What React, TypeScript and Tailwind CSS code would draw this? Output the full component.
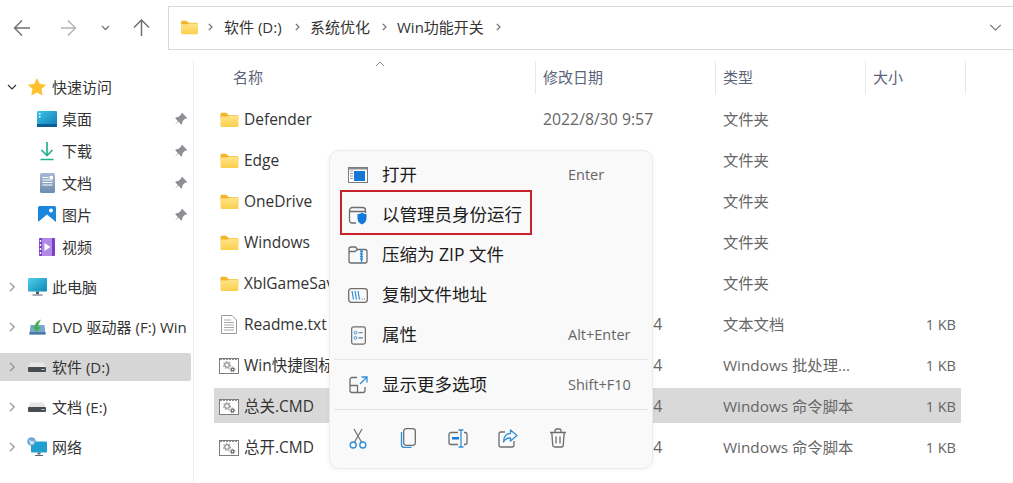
import React from 'react';

const Folder = ({ className = 'w-[19px] h-[16px]' }: { className?: string }) => (
  <svg viewBox="0 0 19 16" className={className}>
    <defs>
      <linearGradient id="fold" x1="0" y1="0" x2="0" y2="1">
        <stop offset="0" stopColor="#ffe58a" />
        <stop offset="1" stopColor="#fbcf4c" />
      </linearGradient>
    </defs>
    <path d="M0.5 2.2C0.5 1.3 1.1 .8 2 .8h4.4l2 2.2H17c.9 0 1.5.6 1.5 1.5v3H.5z" fill="#f2b52c" />
    <path d="M.5 4.6h7.6l1.6-1h7.4c.9 0 1.4.6 1.4 1.4v8.6c0 .9-.6 1.5-1.500 1.500H2c-.9 0-1.500-.6-1.500-1.500z" fill="url(#fold)" />
  </svg>
);

const CmdIcon = () => (
  <svg viewBox="0 0 20 16" className="w-[20px] h-[16px]">
    <rect x=".5" y=".5" width="19" height="15" fill="#fff" stroke="#7d7d7d" />
    <path d="M1 1.500h18" stroke="#8f8f8f" strokeDasharray="2 1" />
    <circle cx="8" cy="7" r="2.300" fill="none" stroke="#a3a3a3" strokeWidth="1.500" />
    <circle cx="8" cy="7" r="3.500" fill="none" stroke="#a3a3a3" strokeWidth="1.200" strokeDasharray="1.500 1.500" />
    <circle cx="13.500" cy="11.500" r="1.400" fill="none" stroke="#6f6f6f" strokeWidth="1.200" />
    <circle cx="13.500" cy="11.500" r="2.400" fill="none" stroke="#6f6f6f" strokeWidth="1" strokeDasharray="1 1" />
  </svg>
);

const TxtIcon = () => (
  <svg viewBox="0 0 16 19" className="w-[16px] h-[19px]">
    <path d="M.5.5h10.500l4.500 4.500v13.500H.5z" fill="#fff" stroke="#9a9a9a" />
    <path d="M3 5h7M3 7.500h10M3 10h10M3 12.500h10M3 15h10" stroke="#a8a8a8" />
  </svg>
);

const Chev = ({ open = false }: { open?: boolean }) => (
  <svg viewBox="0 0 10 10" className="w-[10px] h-[10px]">
    {open ? (
      <path d="M1 3l4 4 4-4" fill="none" stroke="#333" strokeWidth="1.200" />
    ) : (
      <path d="M3 .8l4.200 4.200L3 9.200" fill="none" stroke="#8f8f8f" strokeWidth="1.200" />
    )}
  </svg>
);

const Crumb = () => (
  <svg viewBox="0 0 5 8" className="w-[5px] h-[8px] shrink-0 block" fill="none">
    <path d="M.8.8L4 4 .8 7.200" stroke="#6e6e6e" strokeWidth="1.200" />
  </svg>
);

const Pin = () => (
  <svg viewBox="0 0 14 14" className="w-[14px] h-[14px]">
    <path d="M8 .8l5.200 5.200-1.300.7-1 .1-2.500 2.600-.2 2.300-1 1L4.500 9.500.9 13.100l3-4.100L1.200 6.300l1-1 2.300-.2 2.600-2.500.1-1z" fill="#8c9096" />
  </svg>
);

const Star = () => (
  <svg viewBox="0 0 20 20" className="w-[20px] h-[20px]">
    <path d="M10 1l2.800 5.900 6.400.8-4.700 4.400 1.200 6.400L10 15.400l-5.700 3.100 1.200-6.400L.8 7.700l6.400-.8z" fill="#fdc02f" />
  </svg>
);

const Desktop = () => (
  <svg viewBox="0 0 20 16" className="w-[20px] h-[16px]">
    <defs>
      <linearGradient id="desk" x1="0" y1="0" x2="1" y2="1">
        <stop offset="0" stopColor="#3cc6e6" />
        <stop offset="1" stopColor="#0f78b4" />
      </linearGradient>
    </defs>
    <rect width="20" height="16" rx="1" fill="url(#desk)" />
    <path d="M0 13h20v3H0z" fill="#0c5f94" />
    <path d="M2 2h1.500v1.500H2zM2 5h1.500v1.500H2z" fill="#fff" />
  </svg>
);

const Download = () => (
  <svg viewBox="0 0 16 20" className="w-[16px] h-[20px]">
    <path d="M8 1v13M2.500 9L8 14.500 13.500 9M1.500 18.500h13" fill="none" stroke="#27b08f" strokeWidth="1.700" />
  </svg>
);

const Docs = () => (
  <svg viewBox="0 0 15 20" className="w-[15px] h-[20px]">
    <defs>
      <linearGradient id="docs" x1="0" y1="0" x2="0" y2="1">
        <stop offset="0" stopColor="#a6bbd3" />
        <stop offset="1" stopColor="#6d8cb0" />
      </linearGradient>
    </defs>
    <rect width="15" height="20" rx="1.500" fill="url(#docs)" />
    <path d="M2.500 4.500h6M2.500 7h10M2.500 9.500h10M2.500 12h10" stroke="#fff" />
    <path d="M9.500 3h3.500v3H9.500z" fill="#fff" />
  </svg>
);

const Pics = () => (
  <svg viewBox="0 0 18 18" className="w-[18px] h-[18px]">
    <rect width="18" height="18" rx="1.500" fill="#1a87dc" />
    <path d="M0 16l9-7.500L18 16v2H0z" fill="#fff" />
    <circle cx="13" cy="4.500" r="2" fill="#fff" />
  </svg>
);

const Video = () => (
  <svg viewBox="0 0 16 18" className="w-[16px] h-[18px]">
    <rect width="16" height="18" rx="1" fill="#7b3fc9" />
    <path d="M3 0h10v18H3z" fill="#b18ae6" />
    <path d="M5.500 5l6 4-6 4z" fill="#fff" />
    <path d="M.8 2h1.400v2H.8zM.8 6h1.400v2H.8zM.8 10h1.400v2H.8zM.8 14h1.400v2H.8z" fill="#fff" />
  </svg>
);

const Monitor = () => (
  <svg viewBox="0 0 19 18" className="w-[19px] h-[18px]">
    <defs>
      <linearGradient id="mon" x1="0" y1="0" x2="1" y2="1">
        <stop offset="0" stopColor="#4fd0ea" />
        <stop offset="1" stopColor="#0e86b8" />
      </linearGradient>
    </defs>
    <rect width="19" height="13.500" rx=".8" fill="url(#mon)" />
    <path d="M8 13.500h3v2.500H8zM4.500 16.500h10v1h-10z" fill="#4f5a64" />
  </svg>
);

const Dvd = () => (
  <svg viewBox="0 0 17 16" className="w-[17px] h-[16px]">
    <path d="M1.500 6h14l1 9.500H.5z" fill="#7aa6cc" />
    <path d="M.5 13h16v2.500H.5z" fill="#4b7ba5" />
    <path d="M12 .5C8 2 6 4.500 5.500 8l-2-.5L7.500 13l4-4.500-2.500-.2C9.200 5.500 10.500 3 12 .5z" fill="#3fb24a" />
  </svg>
);

const Drive = () => (
  <svg viewBox="0 0 18 10" className="w-[18px] h-[10px]">
    <path d="M2.500.5h13L18 5H0z" fill="#e6e6e6" />
    <rect y="5" width="18" height="5" rx="1" fill="#4a4d50" />
    <path d="M13.500 7h3v1h-3z" fill="#8fd0f0" />
  </svg>
);

const Network = () => (
  <svg viewBox="0 0 20 20" className="w-[20px] h-[20px]">
    <rect x="4" y="4.500" width="16" height="11" rx=".8" fill="#1f9fd0" />
    <path d="M10.500 15.500h3v2h-3zM8 18h8v1H8z" fill="#5b6770" />
    <circle cx="4.500" cy="4.500" r="4.300" fill="#6ea6d8" />
    <path d="M2 2.500l3 2 2-1-.5 3.500-3 .5z" fill="#d6e7f5" />
  </svg>
);

const IconBox = ({ children }: { children: React.ReactNode }) => (
  <span className="w-[24px] flex justify-center items-center shrink-0">{children}</span>
);

const MenuRow = ({ icon, label, hint, boxed }: { icon: React.ReactNode; label: string; hint?: string; boxed?: boolean }) => (
  <div className="h-[40px] flex items-center relative">
    <span className="w-[52px] flex justify-center pl-[4px] shrink-0">{icon}</span>
    <span className="text-[17.5px] text-[#1c1c1c] leading-none whitespace-nowrap">{label}</span>
    {hint && <span className="absolute left-[238px] text-[14.5px] text-[#666] whitespace-nowrap">{hint}</span>}
    {boxed && <span className="absolute left-[10px] top-0 w-[192px] h-[45px] -mt-[5px] border-2 border-[#c8232c]" />}
  </div>
);

// dates of the rows under the context menu are not visible, so only the ones that show are filled in
const files = [
  { name: 'Defender', date: '2022/8/30 9:57', type: '文件夹', icon: <Folder /> },
  { name: 'Edge', type: '文件夹', icon: <Folder /> },
  { name: 'OneDrive', type: '文件夹', icon: <Folder /> },
  { name: 'Windows', type: '文件夹', icon: <Folder /> },
  { name: 'XblGameSave', type: '文件夹', icon: <Folder /> },
  { name: 'Readme.txt', date: '2022/8/30 19:54', type: '文本文档', size: '1 KB', icon: <TxtIcon /> },
  { name: 'Win快捷图标修复.bat', date: '2022/8/30 19:54', type: 'Windows 批处理...', size: '1 KB', icon: <CmdIcon /> },
  { name: '总关.CMD', date: '2022/8/30 19:54', type: 'Windows 命令脚本', size: '1 KB', icon: <CmdIcon />, selected: true },
  { name: '总开.CMD', date: '2022/8/30 19:54', type: 'Windows 命令脚本', size: '1 KB', icon: <CmdIcon /> },
];

export default function App() {
  return (
    <div
      className="w-[1013px] h-[483px] bg-white overflow-hidden relative text-[15px] text-[#333]"
      style={{ fontFamily: '"Open Sans", "Noto Sans CJK SC", sans-serif' }}
    >
      {/* toolbar */}
      <div className="h-[60px] flex items-start pt-[6px]">
        <div className="w-[168px] h-[43px] shrink-0 flex items-center">
          <svg viewBox="0 0 168 43" className="w-[168px] h-[43px]" fill="none">
            <path d="M30 22H15M22 14.500L14.500 22l7.500 7.500" stroke="#6f6f6f" strokeWidth="1.400" />
            <path d="M61 22h14M68 14.500l7.500 7.500-7.500 7.500" stroke="#b4b4b4" strokeWidth="1.400" />
            <path d="M102 20l3.500 3.500 3.500-3.500" stroke="#777" strokeWidth="1.300" />
            <path d="M141.500 30V14M134 21.500l7.500-7.500 7.500 7.500" stroke="#6a6a6a" strokeWidth="1.400" />
          </svg>
        </div>
        <div className="h-[44px] flex-1 border-y border-l border-[#d9d9d9] flex items-center text-[15px] text-[#333] pl-[11px] pb-[2px]">
          <Folder className="w-[19px] h-[15px]" />
          <span className="ml-[9px]"><Crumb /></span>
          <span className="ml-[11px] w-[59px] whitespace-nowrap">软件 (D:)</span>
          <span className="ml-[12px]"><Crumb /></span>
          <span className="ml-[10px] w-[60px] whitespace-nowrap">系统优化</span>
          <span className="ml-[12px]"><Crumb /></span>
          <span className="ml-[10px] w-[88px] whitespace-nowrap">Win功能开关</span>
          <span className="ml-[11px]"><Crumb /></span>
          <svg viewBox="0 0 14 8" className="w-[13px] h-[7px] ml-auto mr-[11px]" fill="none">
            <path d="M1 1l6 6 6-6" stroke="#666" strokeWidth="1.200" />
          </svg>
        </div>
      </div>

      <div className="flex h-[423px]">
        {/* sidebar */}
        <div className="w-[194px] shrink-0 border-r border-[#f0f0f0] pt-[11px] pr-[2px] text-[#333]">
          <div className="h-[32px] flex items-center">
            <span className="w-[24px] flex justify-center"><Chev open /></span>
            <span className="w-[26px] flex justify-center"><Star /></span>
            <span className="ml-[2px]">快速访问</span>
          </div>
          {[
            { label: '桌面', icon: <Desktop />, pin: true },
            { label: '下载', icon: <Download />, pin: true },
            { label: '文档', icon: <Docs />, pin: true },
            { label: '图片', icon: <Pics />, pin: true },
            { label: '视频', icon: <Video /> },
          ].map((item) => (
            <div key={item.label} className="h-[32px] flex items-center pl-[35px]">
              <IconBox>{item.icon}</IconBox>
              <span className="ml-[3px]">{item.label}</span>
              {item.pin && <span className="ml-auto mr-[3px]"><Pin /></span>}
            </div>
          ))}
          <div className="h-[4px]" />
          {[
            { label: '此电脑', icon: <Monitor /> },
            { label: 'DVD 驱动器 (F:) Win', icon: <Dvd /> },
            { label: '软件 (D:)', icon: <Drive />, selected: true },
            { label: '文档 (E:)', icon: <Drive /> },
            { label: '网络', icon: <Network /> },
          ].map((item) => (
            <div key={item.label} className="h-[40px] flex items-center">
              <div className={`h-[28px] w-full flex items-center rounded-r-[2px] overflow-hidden ${item.selected ? 'bg-[#d6d6d6]' : ''}`}>
                <span className="w-[24px] flex justify-center"><Chev /></span>
                <span className="w-[26px] flex justify-center">{item.icon}</span>
                <span className="ml-[2px] whitespace-nowrap">{item.label}</span>
              </div>
            </div>
          ))}
        </div>

        {/* file list */}
        <div className="flex-1 min-w-0">
          <div className="h-[41px] pt-[1px] flex items-start relative text-[#5b6478] text-[15px]">
            <svg viewBox="0 0 10 6" className="absolute left-[181px] top-[1px] w-[10px] h-[6px]" fill="none">
              <path d="M1 5l4-4 4 4" stroke="#8a8a8a" />
            </svg>
            <div className="h-[33px] w-[342px] pl-[39px] flex items-center border-r border-[#e8e8e8]">名称</div>
            <div className="h-[33px] w-[180px] pl-[7px] flex items-center border-r border-[#e8e8e8]">修改日期</div>
            <div className="h-[33px] w-[150px] pl-[7px] flex items-center border-r border-[#e8e8e8]">类型</div>
            <div className="h-[33px] w-[100px] pl-[7px] flex items-center border-r border-[#e8e8e8]">大小</div>
          </div>
          <div className="ml-[20px] w-[747px] flex flex-col gap-[6px]">
            {files.map((f) => (
              <div key={f.name} className={`h-[35px] pt-[2px] flex items-center shrink-0 ${f.selected ? 'bg-[#d9d9d9]' : ''}`}>
                <span className="w-[30px] flex justify-center shrink-0">{f.icon}</span>
                <span className="w-[299px] shrink-0 text-[#333] text-[15.5px] whitespace-nowrap overflow-hidden">{f.name}</span>
                <span className="w-[180px] shrink-0 text-[#666] text-[15.8px] whitespace-nowrap">{f.date}</span>
                <span className="w-[200px] shrink-0 text-[#666] text-[15.3px] whitespace-nowrap">{f.type}</span>
                <span className="w-[33px] text-right text-[#666] text-[14.5px] whitespace-nowrap">{f.size}</span>
              </div>
            ))}
          </div>
        </div>
      </div>

      {/* context menu */}
      <div className="absolute left-[329px] top-[150px] w-[324px] h-[319px] bg-[#f9f9f9] rounded-[10px] border border-[#ececec] shadow-[0_1px_4px_rgba(0,0,0,0.06)] pt-[4px]">
        <MenuRow
          label="打开"
          hint="Enter"
          icon={
            <svg viewBox="0 0 20 16" className="w-[20px] h-[16px]">
              <rect x=".5" y=".5" width="19" height="15" fill="#fff" stroke="#7c7c7c" />
              <path d="M1 1h18v1.500H1z" fill="#8a8a8a" />
              <path d="M2 4h3M2 6.500h3M2 9h3M2 11.500h3" stroke="#9a9a9a" />
              <rect x="6" y="4" width="11" height="10" fill="#1678d4" />
            </svg>
          }
        />
        <MenuRow
          boxed
          label="以管理员身份运行"
          icon={
            <svg viewBox="0 0 20 19" className="w-[20px] h-[19px]" fill="none">
              <path d="M8 17H4a2.500 2.500 0 0 1-2.500-2.500v-10A3 3 0 0 1 4.500 1.500h10A3 3 0 0 1 17.500 4.500V7M2 5.500h15" stroke="#6d6d6d" strokeWidth="1.300" />
              <path d="M14 6.500c1.300 1 2.800 1.500 4.500 1.500v4.500c0 3-2 5-4.500 6-2.500-1-4.500-3-4.500-6V8c1.700 0 3.200-.5 4.500-1.500z" fill="#1579d8" />
            </svg>
          }
        />
        <MenuRow
          label="压缩为 ZIP 文件"
          icon={
            <svg viewBox="0 0 20 18" className="w-[20px] h-[18px]" fill="none">
              <path d="M1 4.500V15a2 2 0 0 0 2 2h14a2 2 0 0 0 2-2V5.500a2 2 0 0 0-2-2H9.500L7.500 1H3a2 2 0 0 0-2 2zM1 5.500h6l2.500-2" stroke="#6d6d6d" strokeWidth="1.300" />
              <path d="M13.500 3.500v13.500M12 5.500h3M12 8h3M12 10.500h3M12 13h3" stroke="#2f8fd8" strokeWidth="1.300" />
            </svg>
          }
        />
        <MenuRow
          label="复制文件地址"
          icon={
            <svg viewBox="0 0 20 15" className="w-[20px] h-[15px]" fill="none">
              <rect x=".7" y=".7" width="18.600" height="13.600" rx="2.500" stroke="#6d6d6d" strokeWidth="1.300" />
              <path d="M4 3l1.500 8.500M7 3l1.500 8.500M10 3l1.500 8.500" stroke="#2f8fd8" strokeWidth="1.200" />
              <path d="M13.500 11h1M16 11h1" stroke="#6d6d6d" strokeWidth="1.200" />
            </svg>
          }
        />
        <MenuRow
          label="属性"
          hint="Alt+Enter"
          icon={
            <svg viewBox="0 0 16 20" className="w-[15px] h-[19px]" fill="none">
              <rect x=".7" y=".7" width="14.600" height="18.600" rx="2" stroke="#6d6d6d" strokeWidth="1.300" />
              <circle cx="4.800" cy="7" r="1.500" stroke="#2f8fd8" />
              <circle cx="4.800" cy="12.500" r="1.500" stroke="#2f8fd8" />
              <path d="M8 7h4.500M8 12.500h4.500" stroke="#6d6d6d" strokeWidth="1.200" />
            </svg>
          }
        />
        <div className="h-[5px] border-b border-[#e5e5e5] mx-[4px]" />
        <div className="h-[45px] pt-[5px]">
          <MenuRow
            label="显示更多选项"
            hint="Shift+F10"
            icon={
              <svg viewBox="0 0 19 18" className="w-[19px] h-[18px]" fill="none">
                <path d="M8 1.500H3A2 2 0 0 0 1 3.500v11A2 2 0 0 0 3 16.500h11a2 2 0 0 0 2-2V11M1 9.500h7.500v7" stroke="#6d6d6d" strokeWidth="1.300" />
                <path d="M11 8l7-7M12.500 1H18v5.500" stroke="#2f8fd8" strokeWidth="1.300" />
              </svg>
            }
          />
        </div>
        <div className="h-[5px] border-b border-[#e5e5e5] mx-[4px]" />
        <div className="flex items-center h-[56px] pl-[3px]">
          <span className="w-[50px] flex justify-center">
            <svg viewBox="0 0 18 21" className="w-[18px] h-[21px]" fill="none">
              <path d="M5 1l8 14M13 1L5 15" stroke="#6d6d6d" strokeWidth="1.200" />
              <circle cx="4.200" cy="17" r="3" stroke="#2f8fd8" strokeWidth="1.400" />
              <circle cx="13.800" cy="17" r="3" stroke="#2f8fd8" strokeWidth="1.400" />
            </svg>
          </span>
          <span className="w-[50px] flex justify-center">
            <svg viewBox="0 0 16 20" className="w-[16px] h-[20px]" fill="none">
              <path d="M1.500 4v12.500a3 3 0 0 0 3 3h7" stroke="#2f8fd8" strokeWidth="1.400" />
              <rect x="3.700" y=".7" width="11.600" height="16.600" rx="2.500" stroke="#6d6d6d" strokeWidth="1.300" />
            </svg>
          </span>
          <span className="w-[50px] flex justify-center">
            <svg viewBox="0 0 20 19" className="w-[20px] h-[19px]" fill="none">
              <path d="M10 3.500H3a2 2 0 0 0-2 2v8a2 2 0 0 0 2 2h7M16 3.500h1a2 2 0 0 1 2 2v8a2 2 0 0 1-2 2h-1" stroke="#6d6d6d" strokeWidth="1.300" />
              <path d="M4 8h7v2.500H4z" fill="#1579d8" />
              <path d="M10.500 1h5M13 1v17M10.500 18h5" stroke="#2f8fd8" strokeWidth="1.300" />
            </svg>
          </span>
          <span className="w-[50px] flex justify-center">
            <svg viewBox="0 0 20 19" className="w-[20px] h-[19px]" fill="none">
              <path d="M7 3H3a2 2 0 0 0-2 2v11a2 2 0 0 0 2 2h11a2 2 0 0 0 2-2v-4" stroke="#6d6d6d" strokeWidth="1.300" />
              <path d="M12.500 1l6.500 5.500-6.500 5.500V9C9 9 7 10 5.500 13c0-5 2.500-8.500 7-8.500z" stroke="#2f8fd8" strokeWidth="1.300" strokeLinejoin="round" />
            </svg>
          </span>
          <span className="w-[50px] flex justify-center">
            <svg viewBox="0 0 18 20" className="w-[18px] h-[20px]" fill="none">
              <path d="M1 4.500h16M6 4.500V2.500A1.500 1.500 0 0 1 7.500 1h3A1.500 1.500 0 0 1 12 2.500v2M2.800 4.500l.9 12.500a2 2 0 0 0 2 2h6.600a2 2 0 0 0 2-2l.9-12.500" stroke="#6d6d6d" strokeWidth="1.300" />
              <path d="M7 8.500v7M11 8.500v7" stroke="#6d6d6d" strokeWidth="1.300" />
            </svg>
          </span>
        </div>
      </div>
    </div>
  );
}
